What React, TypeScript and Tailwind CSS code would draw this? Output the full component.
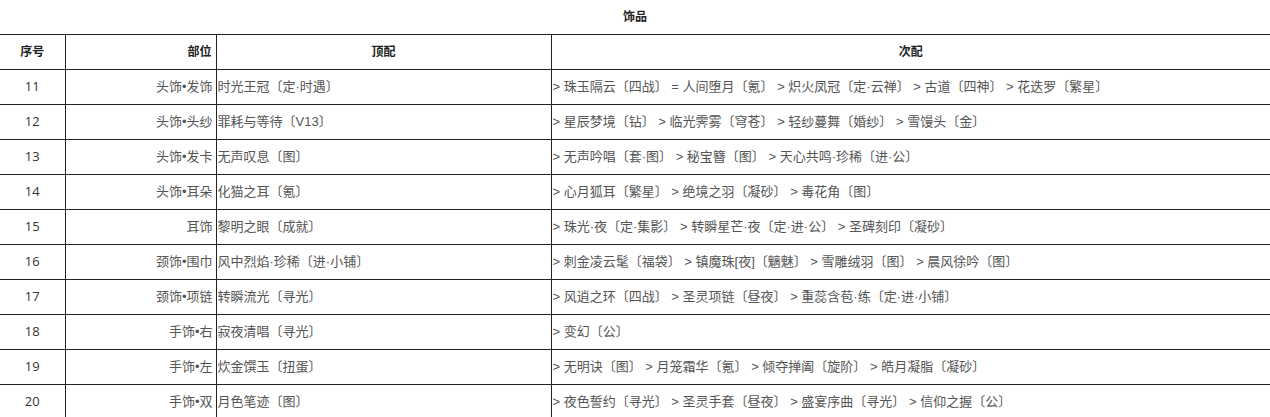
const rows: [string, string, string, string][] = [
  ["11", "头饰•发饰", "时光王冠〔定·时遇〕", "> 珠玉隔云〔四战〕 = 人间堕月〔氪〕 > 炽火凤冠〔定·云禅〕 > 古道〔四神〕 > 花迭罗〔繁星〕"],
  ["12", "头饰•头纱", "罪耗与等待〔V13〕", "> 星辰梦境〔钻〕 > 临光霁雾〔穹苍〕 > 轻纱蔓舞〔婚纱〕 > 雪馒头〔金〕"],
  ["13", "头饰•发卡", "无声叹息〔图〕", "> 无声吟唱〔套·图〕 > 秘宝簪〔图〕 > 天心共鸣·珍稀〔进·公〕"],
  ["14", "头饰•耳朵", "化猫之耳〔氪〕", "> 心月狐耳〔繁星〕 > 绝境之羽〔凝砂〕 > 毒花角〔图〕"],
  ["15", "耳饰", "黎明之眼〔成就〕", "> 珠光·夜〔定·集影〕 > 转瞬星芒·夜〔定·进·公〕 > 圣碑刻印〔凝砂〕"],
  ["16", "颈饰•围巾", "风中烈焰·珍稀〔进·小铺〕", "> 刺金凌云髦〔福袋〕 > 镇魔珠[夜]〔魑魅〕 > 雪雕绒羽〔图〕 > 晨风徐吟〔图〕"],
  ["17", "颈饰•项链", "转瞬流光〔寻光〕", "> 风逍之环〔四战〕 > 圣灵项链〔昼夜〕 > 重蕊含苞·练〔定·进·小铺〕"],
  ["18", "手饰•右", "寂夜清唱〔寻光〕", "> 变幻〔公〕"],
  ["19", "手饰•左", "炊金馔玉〔扭蛋〕", "> 无明诀〔图〕 > 月笼霜华〔氪〕 > 倾夺掸阖〔旋阶〕 > 皓月凝脂〔凝砂〕"],
  ["20", "手饰•双", "月色笔迹〔图〕", "> 夜色誓约〔寻光〕 > 圣灵手套〔昼夜〕 > 盛宴序曲〔寻光〕 > 信仰之握〔公〕"],
];

export default function App() {
  return (
    <div
      className="h-[417px] w-[1270px] overflow-hidden bg-white text-[13px] text-[#555] [text-spacing-trim:space-all]"
      style={{ fontFamily: '"Liberation Sans", "Noto Sans CJK SC", sans-serif' }}
    >
      <div className="flex h-[34px] items-center justify-center text-[12px] font-bold text-[#222]">饰品</div>
      <table className="w-[1270px] table-fixed border-collapse">
        <colgroup>
          <col className="w-[65px]" />
          <col className="w-[151px]" />
          <col className="w-[335px]" />
          <col />
        </colgroup>
        <thead>
          <tr className="h-[35px] border-y border-[#222] text-[12px] font-bold text-[#222]">
            <th className="border-r border-[#222] text-center">序号</th>
            <th className="border-r border-[#222] pr-[4px] text-right">部位</th>
            <th className="border-r border-[#222] text-center">顶配</th>
            <th className="text-center">次配</th>
          </tr>
        </thead>
        <tbody>
          {rows.map(([no, part, top, next]) => (
            <tr key={no} className="h-[35px] border-b border-[#222]">
              <td
                className="border-r border-[#222] text-center text-[13px] text-[#333]"
                style={{ fontFamily: '"Open Sans", sans-serif' }}
              >
                {no}
              </td>
              <td className="border-r border-[#222] pr-[3px] text-right whitespace-nowrap">{part}</td>
              <td className="border-r border-[#222] pl-[1px] whitespace-nowrap">{top}</td>
              <td className="pl-[1px] whitespace-nowrap">{next}</td>
            </tr>
          ))}
        </tbody>
      </table>
    </div>
  );
}
